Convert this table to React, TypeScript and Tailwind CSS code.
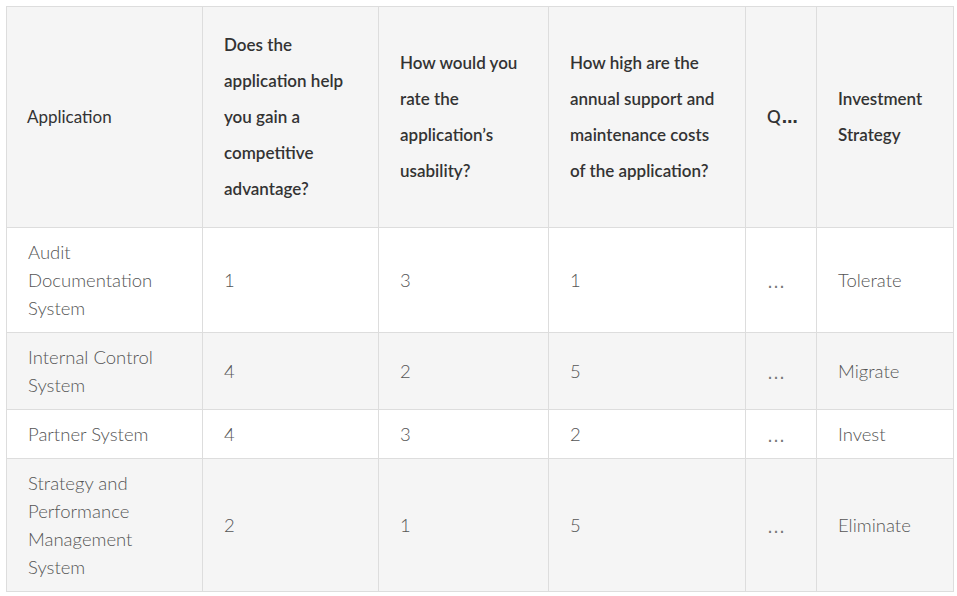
import React from "react";

const rows = [
  { name: ["Audit", "Documentation", "System"], a: "1", b: "3", c: "1", s: "Tolerate" },
  { name: ["Internal Control", "System"], a: "4", b: "2", c: "5", s: "Migrate" },
  { name: ["Partner System"], a: "4", b: "3", c: "2", s: "Invest" },
  { name: ["Strategy and", "Performance", "Management", "System"], a: "2", b: "1", c: "5", s: "Eliminate" },
];

const headers: string[][] = [
  ["Application"],
  ["Does the", "application help", "you gain a", "competitive", "advantage?"],
  ["How would you", "rate the", "application\u2019s", "usability?"],
  ["How high are the", "annual support and", "maintenance costs", "of the application?"],
  ["Q"],
  ["Investment", "Strategy"],
];

function Lines({ lines }: { lines: string[] }) {
  return (
    <>
      {lines.map((l, i) => (
        <React.Fragment key={i}>
          {i > 0 && <br />}
          {l}
        </React.Fragment>
      ))}
    </>
  );
}

const cell = "border border-[#dddddd] py-[10px] pl-[21px] align-middle text-[18.5px] leading-[28px] font-light text-[#555555]";

export default function App() {
  return (
    <div className="bg-white w-[957px] h-[596px] pl-[6px] pt-[6px]" style={{ fontFamily: "Lato, 'Open Sans', sans-serif" }}>
      <table className="table-fixed border-collapse w-[947px]">
        <colgroup>
          <col className="w-[196px]" />
          <col className="w-[176px]" />
          <col className="w-[170px]" />
          <col className="w-[197px]" />
          <col className="w-[71px]" />
          <col className="w-[137px]" />
        </colgroup>
        <thead>
          <tr className="bg-[#f5f5f5]">
            {headers.map((h, i) => (
              <th
                key={i}
                className={`border border-[#dddddd] py-[20px] pr-[8px] text-left align-middle text-[17px] leading-[36px] text-[#333333] ${i === 0 ? "font-normal pl-[20px]" : "font-semibold pl-[21px]"}`}
              >
                <Lines lines={h} />
                {i === 4 && (
                  <span
                    className="inline-block leading-none text-[16px] font-bold ml-[1px]"
                    style={{ fontFamily: "'DejaVu Sans', sans-serif" }}
                  >
                    {"\u2026"}
                  </span>
                )}
              </th>
            ))}
          </tr>
        </thead>
        <tbody>
          {rows.map((r, i) => (
            <tr key={i} className={i % 2 === 1 ? "bg-[#f5f5f5]" : "bg-white"}>
              <td className={`${cell} pl-[20px] pr-[8px]`}>
                <Lines lines={r.name} />
              </td>
              <td className={cell}>{r.a}</td>
              <td className={cell}>{r.b}</td>
              <td className={cell}>{r.c}</td>
              <td className={cell}>
                <span
                  className="inline-block leading-none relative top-[1px] text-[18px] text-[#777777] font-normal"
                  style={{ fontFamily: "'DejaVu Sans', sans-serif" }}
                >
                  {"\u2026"}
                </span>
              </td>
              <td className={`${cell} pl-[20px]`}>{r.s}</td>
            </tr>
          ))}
        </tbody>
      </table>
    </div>
  );
}
